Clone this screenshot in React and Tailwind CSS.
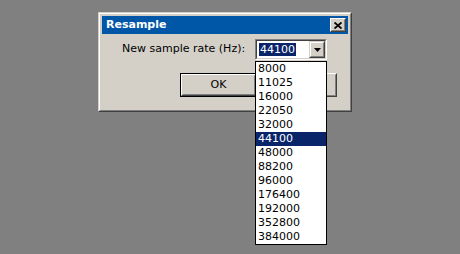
import React from 'react';

const font = { fontFamily: '"DejaVu Sans", Verdana, sans-serif' };

const rates = ['8000', '11025', '16000', '22050', '32000', '44100', '48000', '88200', '96000', '176400', '192000', '352800', '384000'];

function RaisedButton({ children, isDefault, width }) {
  const inner = (
    <div className="h-full w-full border border-t-white border-l-white border-b-[#404040] border-r-[#404040]">
      <div className="h-full w-full flex items-center justify-center border border-t-[#d4d0c8] border-l-[#d4d0c8] border-b-[#808080] border-r-[#808080] text-[11px] text-black">
        {children}
      </div>
    </div>
  );
  if (isDefault) {
    return <div className={`h-[24px] ${width} border border-black`}>{inner}</div>;
  }
  return <div className={`h-[24px] ${width}`}>{inner}</div>;
}

function Combo() {
  return (
    <div className="relative w-[72px] h-[21px]">
      <div className="h-full w-full border border-t-[#808080] border-l-[#808080] border-b-white border-r-white">
        <div className="h-full w-full flex border border-t-[#404040] border-l-[#404040] border-b-[#d4d0c8] border-r-[#d4d0c8] bg-white">
          <div className="flex-1 flex items-center pl-[2px]">
            <span className="bg-[#0a246a] text-white text-[11px] leading-[13px] px-[1px]">44100</span>
          </div>
          <div className="w-[16px] h-full border border-t-[#d4d0c8] border-l-[#d4d0c8] border-b-[#404040] border-r-[#404040] bg-[#d4d0c8]">
            <div className="h-full w-full flex items-center justify-center border border-t-white border-l-white border-b-[#808080] border-r-[#808080]">
              <svg width="7" height="4" viewBox="0 0 7 4">
                <path d="M0 0h7L3.5 4z" fill="black" />
              </svg>
            </div>
          </div>
        </div>
      </div>

      {/* open dropdown list, covers the second button */}
      <div className="absolute left-0 top-[22px] w-[72px] border border-black bg-white z-10">
        {rates.map((r) => (
          <div
            key={r}
            className={`h-[14px] leading-[14px] text-[11px] pl-[2px] ${
              r === '44100' ? 'bg-[#0a246a] text-white' : 'text-black'
            }`}
          >
            {r}
          </div>
        ))}
      </div>
    </div>
  );
}

export default function App() {
  return (
    <div className="w-[460px] h-[254px] bg-[#808080] pt-[12px] pl-[98px] overflow-hidden" style={font}>
      {/* Resample dialog */}
      <div className="w-[254px] h-[100px] border border-t-[#d4d0c8] border-l-[#d4d0c8] border-b-[#404040] border-r-[#404040]">
        <div className="h-full w-full border border-t-white border-l-white border-b-[#808080] border-r-[#808080] bg-[#d4d0c8] p-[2px]">
          {/* caption */}
          <div className="h-[18px] bg-[#0057a8] flex items-center justify-between pl-[4px] pr-[2px]">
            <span className="text-white font-bold text-[11px]">Resample</span>
            <div className="w-[16px] h-[14px] border border-t-white border-l-white border-b-[#404040] border-r-[#404040] bg-[#d4d0c8]">
              <div className="h-full w-full flex items-center justify-center border border-t-[#d4d0c8] border-l-[#d4d0c8] border-b-[#808080] border-r-[#808080]">
                <svg width="8" height="7" viewBox="0 0 8 7">
                  <path d="M0.5 0.5L7.5 6.5M7.5 0.5L0.5 6.5" stroke="black" strokeWidth="1.8" />
                </svg>
              </div>
            </div>
          </div>

          {/* body */}
          <div className="h-[74px]">
            <div className="flex items-center mt-[5px] pl-[20px]">
              <span className="w-[133px] text-[11px] text-black">New sample rate (Hz):</span>
              <Combo />
            </div>
            <div className="flex mt-[13px] pl-[78px] gap-[5px]">
              <RaisedButton isDefault width="w-[77px]">OK</RaisedButton>
              <RaisedButton width="w-[75px]" />
            </div>
          </div>
        </div>
      </div>
    </div>
  );
}
